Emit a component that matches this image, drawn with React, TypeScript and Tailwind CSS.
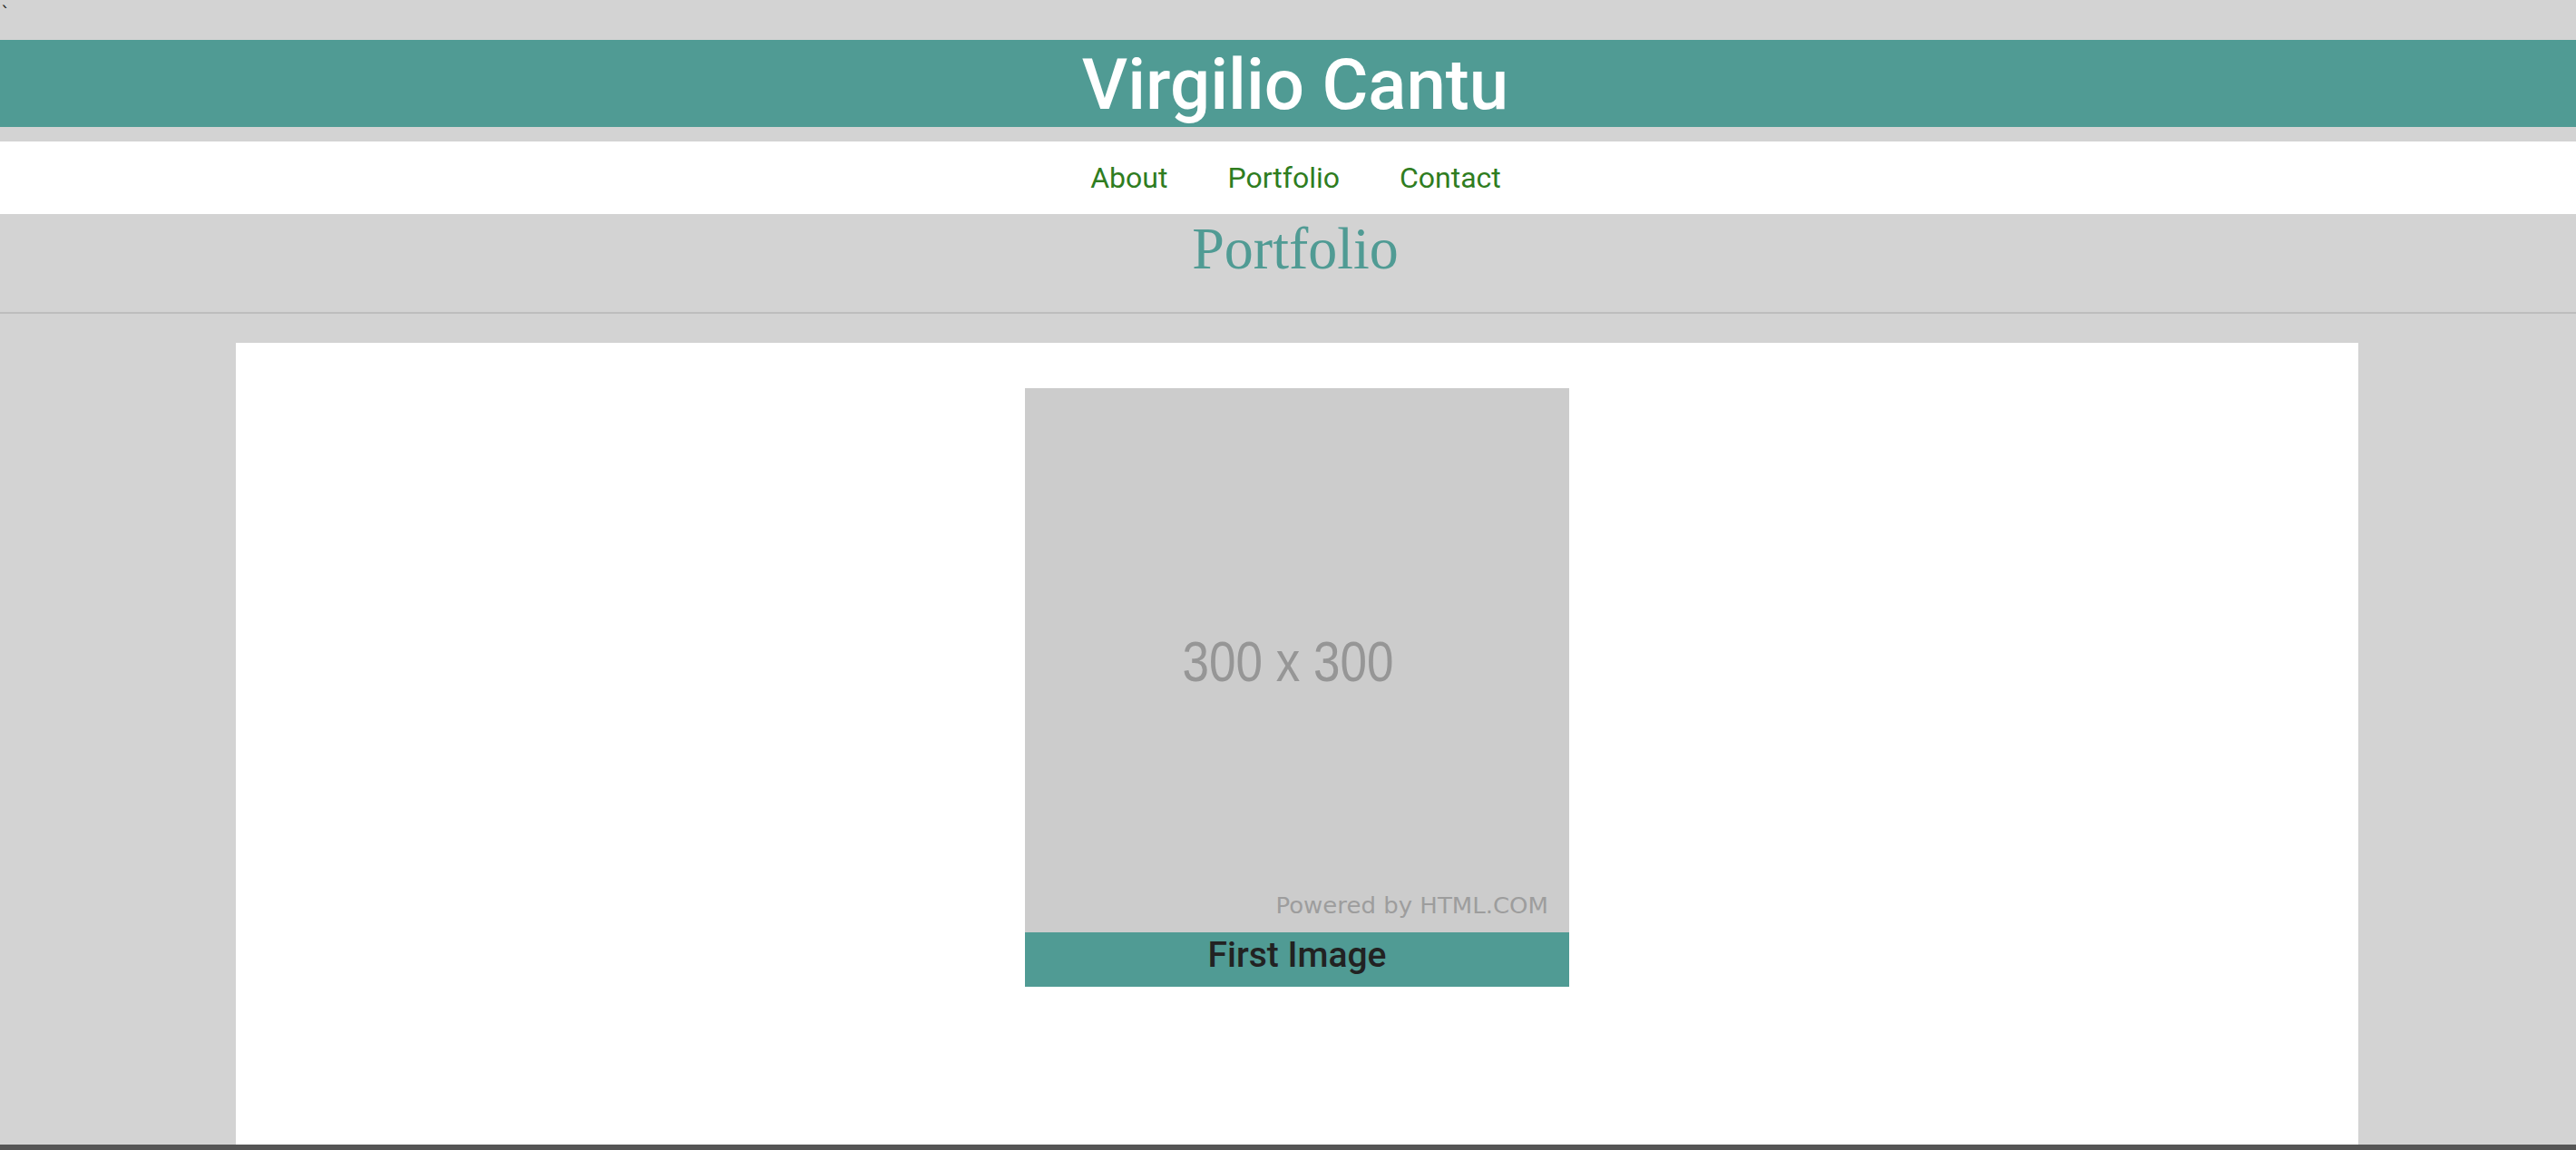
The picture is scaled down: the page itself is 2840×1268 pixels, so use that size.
export default function App() {
  const navLinks = ["About", "Portfolio", "Contact"];

  return (
    <div className="min-h-[1268px] flex flex-col bg-[#d3d3d3] font-['Roboto',sans-serif]">
      {/* stray backtick above the header */}
      <div className="h-[44px] pl-[1px] pt-[3px] text-[20px] leading-[22px] text-[#222222] font-['DejaVu_Sans',sans-serif]">`</div>

      <header className="h-[96px] bg-[#509b94] flex items-center justify-center pl-[16px] pt-[4px]">
        <h1 className="text-[78px] leading-none font-medium text-white">Virgilio Cantu</h1>
      </header>

      <div className="h-[16px]" />

      <nav className="h-[80px] bg-white flex items-center justify-center gap-[66px] pl-[17px]">
        {navLinks.map((link) => (
          <a key={link} href="#" className="text-[32px] leading-none text-[#2f7d1f]">
            {link}
          </a>
        ))}
      </nav>

      <div className="h-[108px]">
        <div className="h-[76px] flex items-center justify-center pl-[16px]">
          <h2 className="text-[64px] leading-[64px] text-[#509b94] font-['Liberation_Serif',serif] scale-y-[1.04]">Portfolio</h2>
        </div>
      </div>
      <hr className="h-[2px] border-0 bg-[#bdbdbd]" />

      <div className="h-[32px]" />

      <main className="flex-1 ml-[260px] mr-[240px] bg-white pt-[50px] flex justify-center">
        <figure className="w-[600px] flex flex-col self-start">
          <div className="relative w-[600px] h-[600px] bg-[#cccccc] flex items-center justify-center pr-[20px]">
            <span className="text-[53px] leading-none text-[#969696] font-['Liberation_Sans',sans-serif] scale-y-[1.2]">300 x 300</span>
            <span className="absolute right-[23px] bottom-[16px] text-[26px] leading-none text-[#9d9d9d] font-['DejaVu_Sans',sans-serif] scale-y-[0.92]">
              Powered by HTML.COM
            </span>
          </div>
          <figcaption className="h-[60px] bg-[#509b94] flex items-center justify-center pb-[10px]">
            <span className="text-[39px] leading-none font-medium text-[#222222]">First Image</span>
          </figcaption>
        </figure>
      </main>

      <div className="h-[6px] bg-[#555555]" />
    </div>
  );
}
